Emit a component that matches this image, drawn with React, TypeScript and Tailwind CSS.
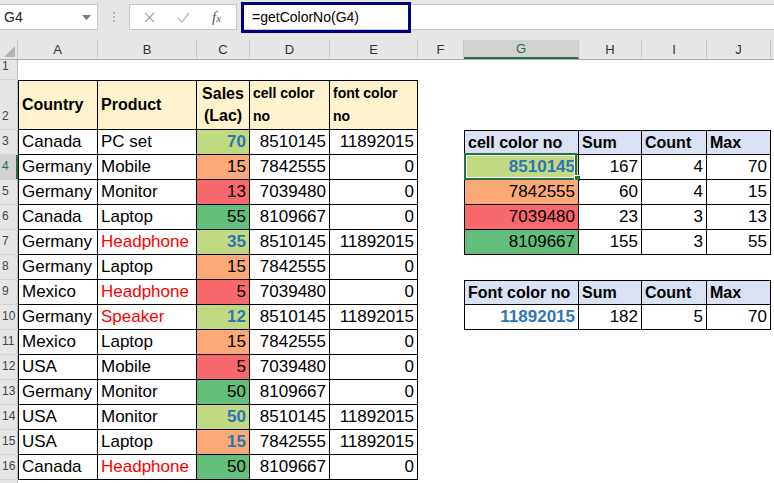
import React from 'react';

type Spec = {
  t?: string;
  right?: boolean;
  bold?: boolean;
  fg?: string;
  bg?: string;
  box?: string;
  sel?: boolean;
  hdr?: boolean;
};

const widths = [
  'w-[80px]',
  'w-[99px]',
  'w-[53px]',
  'w-[80px]',
  'w-[88px]',
  'w-[46px]',
  'w-[115px]',
  'w-[63px]',
  'w-[65px]',
  'w-[64px]',
];
const letters = ['A', 'B', 'C', 'D', 'E', 'F', 'G', 'H', 'I', 'J'];

const LG = 'bg-[#c1da81]';
const OR = 'bg-[#fbaa77]';
const RD = 'bg-[#f8696b]';
const GR = 'bg-[#63be7b]';
const BLUE = 'text-[#2f75b5]';
const RED = 'text-[#ff0000]';

// country, product, red product?, sales, fill, blue font?, cell colour, font colour
const sales: [string, string, boolean, string, string, boolean, string, string][] = [
  ['Canada', 'PC set', false, '70', LG, true, '8510145', '11892015'],
  ['Germany', 'Mobile', false, '15', OR, false, '7842555', '0'],
  ['Germany', 'Monitor', false, '13', RD, false, '7039480', '0'],
  ['Canada', 'Laptop', false, '55', GR, false, '8109667', '0'],
  ['Germany', 'Headphone', true, '35', LG, true, '8510145', '11892015'],
  ['Germany', 'Laptop', false, '15', OR, false, '7842555', '0'],
  ['Mexico', 'Headphone', true, '5', RD, false, '7039480', '0'],
  ['Germany', 'Speaker', true, '12', LG, true, '8510145', '11892015'],
  ['Mexico', 'Laptop', false, '15', OR, false, '7842555', '0'],
  ['USA', 'Mobile', false, '5', RD, false, '7039480', '0'],
  ['Germany', 'Monitor', false, '50', GR, false, '8109667', '0'],
  ['USA', 'Monitor', false, '50', LG, true, '8510145', '11892015'],
  ['USA', 'Laptop', false, '15', OR, true, '7842555', '11892015'],
  ['Canada', 'Headphone', true, '50', GR, false, '8109667', '0'],
];

const summary: Record<number, Spec[]> = {
  3: [
    { t: 'cell color no', bold: true, bg: 'bg-[#d9e1f2]' },
    { t: 'Sum', bold: true, bg: 'bg-[#d9e1f2]' },
    { t: 'Count', bold: true, bg: 'bg-[#d9e1f2]' },
    { t: 'Max', bold: true, bg: 'bg-[#d9e1f2]' },
  ],
  4: [
    { t: '8510145', right: true, bold: true, fg: BLUE, bg: LG, sel: true },
    { t: '167', right: true },
    { t: '4', right: true },
    { t: '70', right: true },
  ],
  5: [
    { t: '7842555', right: true, bg: OR },
    { t: '60', right: true },
    { t: '4', right: true },
    { t: '15', right: true },
  ],
  6: [
    { t: '7039480', right: true, bg: RD },
    { t: '23', right: true },
    { t: '3', right: true },
    { t: '13', right: true },
  ],
  7: [
    { t: '8109667', right: true, bg: GR },
    { t: '155', right: true },
    { t: '3', right: true },
    { t: '55', right: true },
  ],
  9: [
    { t: 'Font color no', bold: true, bg: 'bg-[#d9e1f2]' },
    { t: 'Sum', bold: true, bg: 'bg-[#d9e1f2]' },
    { t: 'Count', bold: true, bg: 'bg-[#d9e1f2]' },
    { t: 'Max', bold: true, bg: 'bg-[#d9e1f2]' },
  ],
  10: [
    { t: '11892015', right: true, bold: true, fg: BLUE },
    { t: '182', right: true },
    { t: '5', right: true },
    { t: '70', right: true },
  ],
};

function rowSpecs(r: number): Spec[] {
  const cells: Spec[] = Array.from({ length: 10 }, () => ({}));
  if (r === 2) {
    const hb = 'bg-[#fff2cc]';
    cells[0] = { t: 'Country', bold: true, bg: hb, hdr: true };
    cells[1] = { t: 'Product', bold: true, bg: hb, hdr: true };
    cells[2] = { t: 'Sales|(Lac)', bold: true, bg: hb, hdr: true };
    cells[3] = { t: 'cell color|no', bold: true, bg: hb, hdr: true };
    cells[4] = { t: 'font color|no', bold: true, bg: hb, hdr: true };
  }
  if (r >= 3 && r <= 16) {
    const [c, p, pRed, s, fill, sBlue, d, e] = sales[r - 3];
    cells[0] = { t: c };
    cells[1] = { t: p, fg: pRed ? RED : undefined };
    cells[2] = { t: s, right: true, bg: fill, bold: sBlue, fg: sBlue ? BLUE : undefined };
    cells[3] = { t: d, right: true };
    cells[4] = { t: e, right: true };
  }
  if (r >= 2 && r <= 16) {
    for (let i = 0; i < 5; i++) {
      cells[i].box =
        'border-r border-b border-black' + (r === 2 ? ' border-t' : '') + (i === 0 ? ' border-l' : '');
    }
  }
  const sum = summary[r];
  if (sum) {
    sum.forEach((s, j) => {
      cells[6 + j] = {
        ...s,
        box: 'border-r border-b border-black' + (r === 3 || r === 9 ? ' border-t' : '') + (j === 0 ? ' border-l' : ''),
      };
    });
  }
  return cells;
}

function Cell({ spec, w }: { spec: Spec; w: string }) {
  const lines = spec.t ? spec.t.split('|') : [];
  return (
    <div
      className={`relative shrink-0 h-full flex items-center overflow-visible whitespace-nowrap px-[3px] ${w} ${
        spec.box ?? ''
      } ${spec.bg ?? ''} ${spec.fg ?? 'text-black'} ${spec.bold ? 'font-bold' : ''} ${
        spec.right ? 'justify-end' : ''
      } ${spec.hdr ? (lines.length > 1 ? 'text-[14px] leading-[23px]' : 'text-[16px]') : spec.bold && !spec.right ? 'text-[16px]' : 'text-[17px]'}`}
    >
      {lines.length > 1 ? (
        <div className={`flex flex-col ${spec.t?.startsWith('Sales') ? 'items-center w-full text-[16px] leading-[22px]' : ''}`}>
          {lines.map((l) => (
            <span key={l}>{l}</span>
          ))}
        </div>
      ) : (
        <span>{spec.t}</span>
      )}
      {spec.sel && (
        <>
          <div className="absolute left-[-1px] top-[-2px] right-[1px] bottom-[-1px] border-2 border-[#217346] shadow-[inset_0_0_0_1px_white] pointer-events-none" />
          <div className="absolute right-[-3px] bottom-[-3px] w-[7px] h-[7px] bg-[#217346] border border-white" />
        </>
      )}
    </div>
  );
}

function FormulaBar() {
  return (
    <div className="h-[40px] bg-[#e6e6e6] flex items-start pt-[4px] text-[#222]">
      <div className="w-[98px] h-[26px] bg-white border border-l-0 border-[#c6c6c6] flex items-center justify-between pl-[4px] pr-[6px] text-[14px]">
        <span>G4</span>
        <svg width="9" height="5" viewBox="0 0 9 5">
          <path d="M0 0h9L4.5 5z" fill="#777" />
        </svg>
      </div>
      <div className="w-[31px] h-[26px] flex items-center justify-center">
        <div className="flex flex-col gap-[2px]">
          <span className="w-[2px] h-[2px] bg-[#b4b4b4]" />
          <span className="w-[2px] h-[2px] bg-[#b4b4b4]" />
          <span className="w-[2px] h-[2px] bg-[#b4b4b4]" />
        </div>
      </div>
      <div className="w-[108px] h-[26px] bg-white border border-[#c6c6c6] flex items-center">
        <svg className="ml-[14px]" width="11" height="11" viewBox="0 0 11 11">
          <path d="M1 1l9 9M10 1l-9 9" stroke="#a6a6a6" strokeWidth="1.3" />
        </svg>
        <svg className="ml-[22px]" width="13" height="11" viewBox="0 0 13 11">
          <path d="M1 6l4 4 7-9" stroke="#bdbdbd" strokeWidth="1.4" fill="none" />
        </svg>
        <span className="ml-[22px] font-['Liberation_Serif',serif] italic text-[15px] text-[#555]">
          f<span className="text-[11px]">x</span>
        </span>
      </div>
      <div className="flex-1 h-[26px] ml-[4px] bg-white border-y border-[#c6c6c6] flex items-start">
        <div className="w-[170px] h-[31px] -mt-[3px] border-[3px] border-[#000080] flex items-center pl-[8px] text-[14px] text-black">
          =getColorNo(G4)
        </div>
      </div>
    </div>
  );
}

export default function App() {
  const heights: Record<number, string> = { 1: 'h-[20px]', 2: 'h-[50px]' };
  const rows = Array.from({ length: 17 }, (_, i) => i + 1);
  return (
    <div className="w-[774px] h-[483px] overflow-hidden bg-white font-['Liberation_Sans',Arial,sans-serif]">
      <FormulaBar />
      {/* column headers */}
      <div className="h-[20px] flex bg-[#e6e6e6] border-b border-[#ababab] text-[13px] text-[#333]">
        <div className="relative w-[18px] shrink-0 border-r border-[#c6c6c6]">
          <svg className="absolute right-[2px] bottom-[2px]" width="11" height="11" viewBox="0 0 11 11">
            <path d="M11 0v11H0z" fill="#b4b4b4" />
          </svg>
        </div>
        {letters.map((l, i) => (
          <div
            key={l}
            className={`${widths[i]} shrink-0 flex items-center justify-center border-r border-[#c6c6c6] ${
              l === 'G' ? 'bg-[#d2d2d2] text-[#217346] border-b-2 border-b-[#217346]' : ''
            }`}
          >
            {l}
          </div>
        ))}
        <div className="flex-1" />
      </div>
      {rows.map((r) => {
        const specs = rowSpecs(r);
        return (
          <div key={r} className={`flex ${heights[r] ?? 'h-[25px]'}`}>
            <div
              className={`w-[18px] shrink-0 flex items-end pb-[4px] pl-[2px] text-[12px] border-b border-[#d4d4d4] ${
                r === 4
                  ? 'bg-[#d2d2d2] text-[#217346] border-r-2 border-r-[#217346]'
                  : 'bg-[#e6e6e6] text-[#444] border-r border-r-[#bdbdbd]'
              }`}
            >
              {r < 17 ? r : null}
            </div>
            {specs.map((s, i) => (
              <Cell key={i} spec={s} w={widths[i]} />
            ))}
            <div className="flex-1" />
          </div>
        );
      })}
    </div>
  );
}
